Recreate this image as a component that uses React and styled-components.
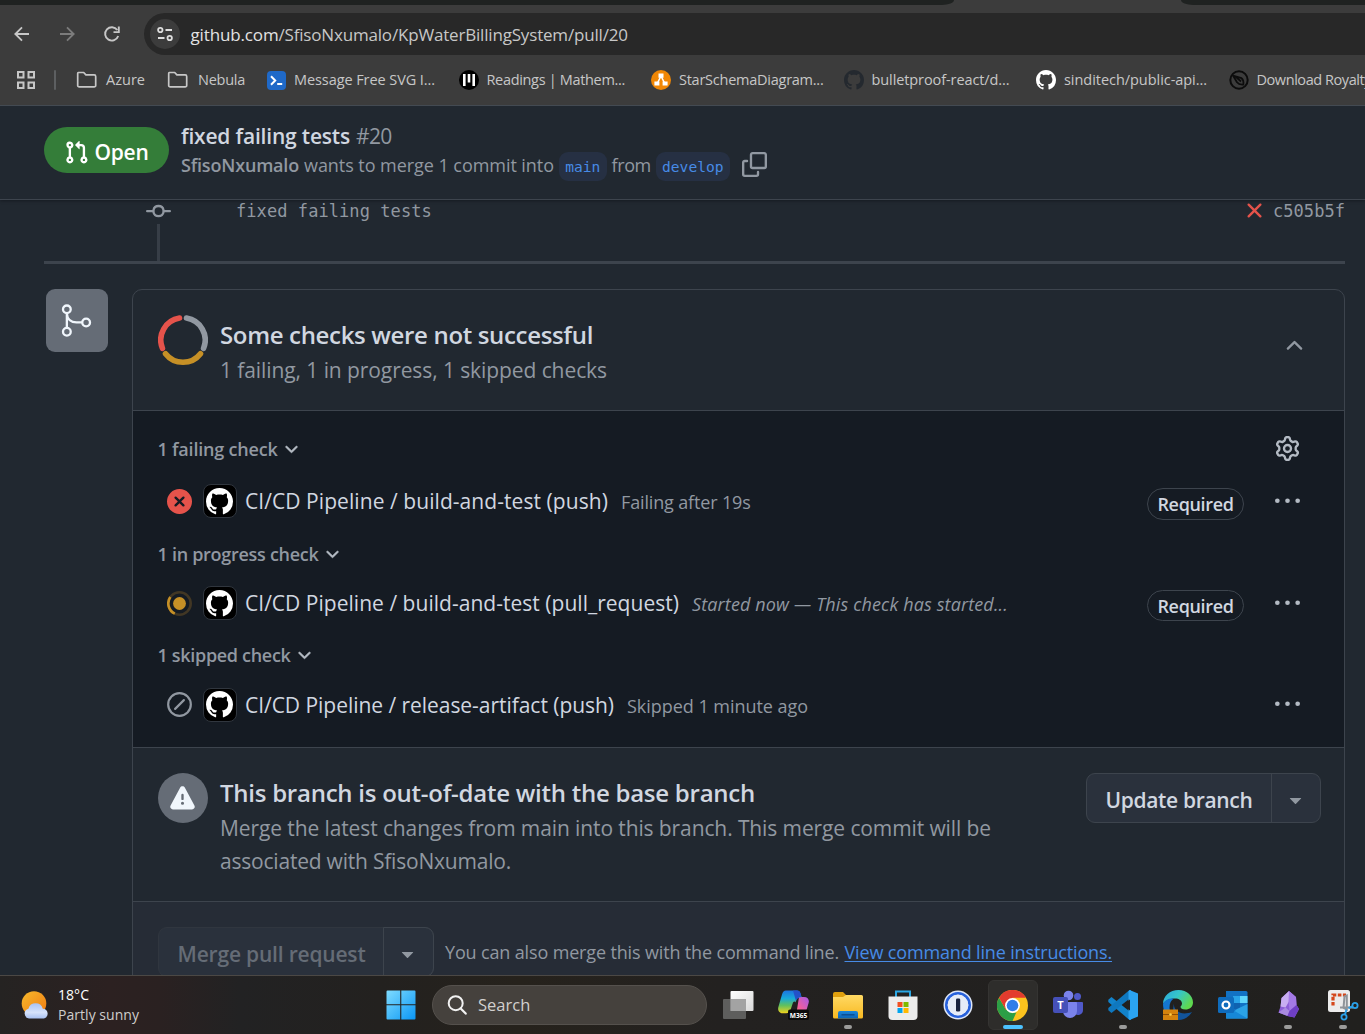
import React from "react";
import styled, { createGlobalStyle, css } from "styled-components";

const Global = createGlobalStyle`
  * { box-sizing: border-box; }
  html, body { margin: 0; overflow: hidden; background: #212830; }
  body { font-family: "Open Sans", "Noto Sans", sans-serif; }
  svg { display: block; flex: none; }
`;

const mono = `"DejaVu Sans Mono", "Liberation Mono", monospace`;

/* ---------- shell ---------- */
const Screen = styled.div`
  width: 1365px; height: 1034px; overflow: hidden;
  display: flex; flex-direction: column;
`;
const Text = styled.span`
  white-space: pre;
  font-size: ${(p) => p.$size || 18}px;
  font-weight: ${(p) => (p.$bold ? 600 : 400)};
  font-style: ${(p) => (p.$italic ? "italic" : "normal")};
  letter-spacing: ${(p) => p.$ls || 0}px;
  color: ${(p) => p.$color || "#9198a1"};
  line-height: ${(p) => p.$lh || 26}px;
`;

/* ---------- browser ---------- */
const TabStrip = styled.div`
  height: 5px; background: #3c3c3c; display: flex; justify-content: space-between; flex: none;
`;
const InactiveTabs = styled.div`
  height: 5px; background: #1f2221;
  width: ${(p) => p.$w}px;
  border-radius: ${(p) => (p.$left ? "0 0 12px 0 / 0 0 5px 0" : "0 0 0 12px / 0 0 0 5px")};
`;
const Toolbar = styled.div`
  height: 58px; flex: none; background: #3c3c3c; display: flex; align-items: center;
  padding: 0 0 0 13px;
`;
const NavIcons = styled.div`
  display: flex; align-items: center; gap: 27px; width: 131px;
`;
const AddressBar = styled.div`
  flex: 1; height: 42px; background: #282828; border-radius: 21px 0 0 21px;
  display: flex; align-items: center; padding-left: 6px; gap: 10.5px;
`;
const SiteInfo = styled.div`
  width: 30px; height: 30px; border-radius: 50%; background: #3c3c3c;
  display: flex; align-items: center; justify-content: center;
`;
const Url = styled.div`
  padding-top: 2px; display: flex;
`;
const Bookmarks = styled.div`
  height: 43px; flex: none; background: #3c3c3c; border-bottom: 1px solid #434a52;
  display: flex; align-items: center; padding: 0 0 8px 17px; overflow: hidden;
`;
const Separator = styled.div`
  width: 2px; height: 20px; background: #5d5f61; margin: 0 20px 0 19px; border-radius: 1px; flex: none;
`;
const Bookmark = styled.div`
  display: flex; align-items: center; gap: ${(p) => p.$gap || 8}px; flex: none;
  width: ${(p) => p.$w}px;
`;

/* ---------- PR header ---------- */
const Page = styled.div`
  flex: 1; min-height: 0; overflow: hidden; background: #212830;
  display: flex; flex-direction: column;
`;
const PrHeader = styled.header`
  height: 94px; flex: none; border-bottom: 1px solid #3d444d; padding: 0 0 0 44px;
  display: flex; align-items: flex-start; gap: 12px;
  box-shadow: 0 1px 3px rgba(1, 4, 9, 0.35);
`;
const OpenBadge = styled.div`
  width: 125px; height: 46px; margin-top: 21px; border-radius: 23px; background: #347d39;
  display: flex; align-items: center; padding: 4px 0 0 20px; gap: 5.5px;
`;
const PrInfo = styled.div`
  display: flex; flex-direction: column; padding-top: 16px;
`;
const Line = styled.div`
  display: flex; align-items: center; height: ${(p) => p.$h}px; gap: ${(p) => p.$gap || 6}px;
`;
const Branch = styled.span`
  font: 14.6px/29px ${mono}; color: #478be6; background: #263043; border-radius: 9px;
  height: 29px; padding: 0 6.2px; letter-spacing: ${(p) => p.$ls || 0}px; white-space: pre;
  margin: 3px 0 0;
`;
const CopyButton = styled.div`
  margin-left: 7px;
`;

/* ---------- timeline ---------- */
const Timeline = styled.div`
  height: 64px; flex: none; margin: 0 20px 0 44px; border-bottom: 3px solid #3d444d;
  display: flex; align-items: flex-start;
`;
const CommitTrack = styled.div`
  width: 192px; height: 61px; padding-left: 102px; display: flex; flex-direction: column;
  svg { margin-top: -1px; }
`;
const TrackLine = styled.div`
  width: 3px; flex: 1; background: #373e47; margin: 0 0 0 11px;
`;
const CommitText = styled.span`
  font: 17px/22px ${mono}; letter-spacing: ${(p) => p.$ls}px; color: #9198a1; white-space: pre;
`;
const CommitHash = styled.div`
  margin: -2px 0 0 auto; display: flex; align-items: center; gap: 6px;
`;

/* ---------- merge box ---------- */
const MergeArea = styled.div`
  flex: 1; min-height: 0; display: flex; gap: 24px; padding: 25px 20px 0 46px; overflow: hidden;
`;
const MergeIcon = styled.div`
  width: 62px; height: 63px; border-radius: 9px; background: #656c76; flex: none;
  display: flex; align-items: center; justify-content: center; padding-right: 2px;
`;
const MergeBox = styled.section`
  flex: 1; height: 740px; border: 1px solid #3d444d; border-radius: 10px; overflow: hidden;
`;
const sectionRow = css`
  display: flex; align-items: flex-start; gap: 12px; padding-left: 25px;
`;
const StatusHeader = styled.div`
  ${sectionRow} height: 121px; padding-top: 25px; border-bottom: 1px solid #3d444d;
`;
const Copy = styled.div`
  display: flex; flex-direction: column; padding-top: ${(p) => p.$top || 0}px;
`;
const Collapse = styled.div`
  margin: 18px 37px 0 auto;
`;
const Checks = styled.div`
  height: 337px; background: #151b23; border-bottom: 1px solid #3d444d; padding: 20px 44px 0 24.5px;
`;
const GroupTitle = styled.div`
  display: flex; align-items: center; gap: 4px; height: ${(p) => p.$h || 36}px;
`;
const Gear = styled.div`
  margin: -2px 0 0 auto;
`;
const CheckRow = styled.div`
  display: flex; align-items: center; height: ${(p) => p.$h}px; padding-left: 9px;
`;
const Avatar = styled.div`
  width: 34px; height: 34px; margin: 0 8.500px 0 11px; border-radius: 8px; background: #000;
  border: 1px solid #30363e; display: flex; align-items: center; justify-content: center; flex: none;
`;
const Detail = styled.div`
  margin-left: 13px; padding-top: 2px; display: flex;
`;
const Required = styled.div`
  height: ${(p) => p.$h || 32}px; width: 97px; margin: 5px 31px 0 auto; border: 1px solid #3d444d; border-radius: 16px;
  display: flex; align-items: center; justify-content: center;
`;
const Menu = styled.div`
  margin-left: ${(p) => (p.$auto ? "auto" : "0")};
`;
const BranchState = styled.div`
  ${sectionRow} height: 154px; padding-top: 25px; padding-right: 23px; border-bottom: 1px solid #3d444d;
`;
const AlertCircle = styled.div`
  width: 50px; height: 50px; border-radius: 50%; background: #656c76; flex: none;
  display: flex; align-items: center; justify-content: center; padding-right: 1px;
`;
const SplitButton = styled.div`
  display: flex; height: 50px; border-radius: 9px; background: #2a313c;
  border: 1px solid ${(p) => (p.$muted ? "#30363f" : "#3d444d")};
  margin-left: ${(p) => (p.$push ? "auto" : "0")}; flex: none;
`;
const ButtonLabel = styled.div`
  width: ${(p) => p.$w}px; display: flex; align-items: center; justify-content: center; padding-top: 4px;
`;
const ButtonCaret = styled.div`
  width: ${(p) => p.$w}px; border-left: 1px solid #3d444d; display: flex; align-items: center; justify-content: center;
  ${(p) => p.$outlined && css`border: 1px solid #3d444d; margin: -1px; border-radius: 0 9px 9px 0;`}
  padding: 2px 2px 0 0;
`;
const MergeFooter = styled.div`
  background: #262c36; height: 180px; padding: 25px 0 0 25px; display: flex; align-items: flex-start; gap: 11px;
`;
const FooterText = styled.div`
  display: flex; gap: 5.500px; padding-top: 12px;
`;
const Link = styled(Text)`
  color: #478be6; text-decoration: underline; text-underline-offset: 2px; text-decoration-thickness: 1px;
`;

/* ---------- taskbar ---------- */
const Taskbar = styled.footer`
  height: 59px; flex: none; border-top: 1px solid #4b4845; display: flex; align-items: center; overflow: hidden;
  background: linear-gradient(90deg, #252322 0, #2c2121 110px, #2a2121 160px, #222223 240px, #23211f 380px, #26221c 520px, #232120 720px, #21201e 1365px);
`;
const Weather = styled.div`
  width: 373px; flex: none; padding-left: 20px; display: flex; align-items: center; gap: 8px;
`;
const Slot = styled.div`
  width: 55px; height: 58px; flex: none; display: flex; flex-direction: column; align-items: center; justify-content: center;
  position: relative;
`;
const ActiveTile = styled.div`
  width: 50px; height: 50px; border-radius: 6px; background: #2e2d2b; border: 1px solid #353432;
  display: flex; align-items: center; justify-content: center;
`;
const RunMark = styled.div`
  position: absolute; bottom: 5px; height: 4px; border-radius: 2px;
  width: ${(p) => (p.$active ? 20 : 8)}px; background: ${(p) => (p.$active ? "#4cc2ff" : "#9b9b9a")};
`;
const SearchBox = styled.div`
  width: 275px; height: 40px; margin: 0 3px 0 4px; border-radius: 20px; background: #45413d; border: 1px solid #55514d;
  display: flex; align-items: center; gap: 11px; padding-left: 14px; flex: none;
`;

/* ---------- icons ---------- */
const paths = {
  github: "M8 0c4.42 0 8 3.58 8 8a8.013 8.013 0 0 1-5.45 7.59c-.4.08-.55-.17-.55-.38 0-.27.01-1.13.01-2.2 0-.75-.25-1.23-.54-1.48 1.78-.2 3.65-.88 3.65-3.95 0-.88-.31-1.59-.82-2.15.08-.2.36-1.02-.08-2.12 0 0-.67-.22-2.2.82-.64-.18-1.32-.27-2-.27-.68 0-1.36.09-2 .27-1.53-1.03-2.2-.82-2.2-.82-.44 1.1-.16 1.92-.08 2.12-.51.56-.82 1.28-.82 2.15 0 3.06 1.86 3.75 3.64 3.95-.23.2-.44.55-.51 1.07-.46.21-1.61.55-2.33-.66-.15-.24-.6-.83-1.23-.82-.67.01-.27.38.01.53.34.19.73.9.82 1.13.16.45.68 1.31 2.69.94 0 .67.01 1.3.01 1.49 0 .21-.15.45-.55.38A7.995 7.995 0 0 1 0 8c0-4.42 3.58-8 8-8Z",
  pull: "M1.5 3.25a2.25 2.25 0 1 1 3 2.122v5.256a2.251 2.251 0 1 1-1.5 0V5.372A2.25 2.25 0 0 1 1.5 3.25Zm5.677-.177L9.573.677A.25.25 0 0 1 10 .854V2.5h1A2.5 2.5 0 0 1 13.5 5v5.628a2.251 2.251 0 1 1-1.5 0V5a1 1 0 0 0-1-1h-1v1.646a.25.25 0 0 1-.427.177L7.177 3.427a.25.25 0 0 1 0-.354ZM3.75 2.5a.75.75 0 1 0 0 1.5.75.75 0 0 0 0-1.5Zm0 9.5a.75.75 0 1 0 0 1.5.75.75 0 0 0 0-1.5Zm8.25.75a.75.75 0 1 0 1.5 0 .75.75 0 0 0-1.5 0Z",
  copy: "M0 6.75C0 5.784.784 5 1.75 5h1.5a.75.75 0 0 1 0 1.5h-1.5a.25.25 0 0 0-.25.25v7.5c0 .138.112.25.25.25h7.5a.25.25 0 0 0 .25-.25v-1.5a.75.75 0 0 1 1.5 0v1.5A1.75 1.75 0 0 1 9.25 16h-7.5A1.75 1.75 0 0 1 0 14.25Z M5 1.75C5 .784 5.784 0 6.75 0h7.5C15.216 0 16 .784 16 1.75v7.5A1.75 1.75 0 0 1 14.25 11h-7.5A1.75 1.75 0 0 1 5 9.25Zm1.75-.25a.25.25 0 0 0-.25.25v7.5c0 .138.112.25.25.25h7.5a.25.25 0 0 0 .25-.25v-7.5a.25.25 0 0 0-.25-.25Z",
  gear: "M8 0a8.2 8.2 0 0 1 .701.031C9.444.095 9.99.645 10.16 1.29l.288 1.107c.018.066.079.158.212.224.231.114.454.243.668.386.123.082.233.09.299.071l1.103-.303c.644-.176 1.392.021 1.82.63.27.385.506.792.704 1.218.315.675.111 1.422-.364 1.891l-.814.806c-.049.048-.098.147-.088.294.016.257.016.515 0 .772-.01.147.038.246.088.294l.814.806c.475.469.679 1.216.364 1.891a7.977 7.977 0 0 1-.704 1.217c-.428.61-1.176.807-1.82.63l-1.102-.302c-.067-.019-.177-.011-.3.071a5.909 5.909 0 0 1-.668.386c-.133.066-.194.158-.211.224l-.29 1.106c-.168.646-.715 1.196-1.458 1.26a8.006 8.006 0 0 1-1.402 0c-.743-.064-1.289-.614-1.458-1.26l-.289-1.106c-.018-.066-.079-.158-.212-.224a5.738 5.738 0 0 1-.668-.386c-.123-.082-.233-.09-.299-.071l-1.103.303c-.644.176-1.392-.021-1.82-.63a8.12 8.12 0 0 1-.704-1.218c-.315-.675-.111-1.422.363-1.891l.815-.806c.05-.048.098-.147.088-.294a6.214 6.214 0 0 1 0-.772c.01-.147-.038-.246-.088-.294l-.815-.806C.635 6.045.431 5.298.746 4.623a7.92 7.92 0 0 1 .704-1.217c.428-.61 1.176-.807 1.82-.63l1.102.302c.067.019.177.011.3-.071.214-.143.437-.272.668-.386.133-.066.194-.158.211-.224l.29-1.106C6.009.645 6.556.095 7.299.03 7.53.01 7.764 0 8 0Zm-.571 1.525c-.036.003-.108.036-.137.146l-.289 1.105c-.147.561-.549.967-.998 1.189-.173.086-.34.183-.5.29-.417.278-.97.423-1.529.27l-1.103-.303c-.109-.03-.175.016-.195.045-.22.312-.412.644-.573.99-.014.031-.021.11.059.19l.815.806c.411.406.562.957.53 1.456a4.709 4.709 0 0 0 0 .582c.032.499-.119 1.05-.53 1.456l-.815.806c-.081.08-.073.159-.059.19.162.346.353.677.573.989.02.03.085.076.195.046l1.102-.303c.56-.153 1.113-.008 1.53.27.161.107.328.204.501.29.447.222.85.629.997 1.189l.289 1.105c.029.109.101.143.137.146a6.6 6.6 0 0 0 1.142 0c.036-.003.108-.036.137-.146l.289-1.105c.147-.561.549-.967.998-1.189.173-.086.34-.183.5-.29.417-.278.97-.423 1.529-.27l1.103.303c.109.029.175-.016.195-.045.22-.313.411-.644.573-.99.014-.031.021-.11-.059-.19l-.815-.806c-.411-.406-.562-.957-.53-1.456a4.709 4.709 0 0 0 0-.582c-.032-.499.119-1.05.53-1.456l.815-.806c.081-.08.073-.159.059-.19a6.464 6.464 0 0 0-.573-.989c-.02-.03-.085-.076-.195-.046l-1.102.303c-.56.153-1.113.008-1.53-.27a4.44 4.44 0 0 0-.501-.29c-.447-.222-.85-.629-.997-1.189l-.289-1.105c-.029-.11-.101-.143-.137-.146a6.6 6.6 0 0 0-1.142 0ZM11 8a3 3 0 1 1-6 0 3 3 0 0 1 6 0ZM9.5 8a1.5 1.5 0 1 0-3.001.001A1.5 1.5 0 0 0 9.5 8Z",
  alert: "M6.457 1.047c.659-1.234 2.427-1.234 3.086 0l6.082 11.378A1.75 1.75 0 0 1 14.082 15H1.918a1.75 1.75 0 0 1-1.543-2.575ZM8 5a.75.75 0 0 0-.75.75v2.5a.75.75 0 0 0 1.5 0v-2.5A.75.75 0 0 0 8 5Zm1 6a1 1 0 1 0-2 0 1 1 0 0 0 2 0Z",
  down: "M12.78 5.22a.749.749 0 0 1 0 1.06l-4.25 4.25a.749.749 0 0 1-1.06 0L3.22 6.28a.749.749 0 1 1 1.06-1.06L8 8.939l3.72-3.719a.749.749 0 0 1 1.06 0Z",
  up: "M3.22 10.53a.749.749 0 0 1 0-1.06l4.25-4.25a.749.749 0 0 1 1.06 0l4.25 4.25a.749.749 0 1 1-1.06 1.06L8 6.811 4.28 10.53a.749.749 0 0 1-1.06 0Z",
  fail: "M2.343 13.657A8 8 0 1 1 13.658 2.343 8 8 0 0 1 2.343 13.657ZM6.03 4.97a.751.751 0 0 0-1.042.018.751.751 0 0 0-.018 1.042L6.94 8 4.97 9.97a.749.749 0 0 0 .326 1.275.749.749 0 0 0 .734-.215L8 9.06l1.97 1.97a.749.749 0 0 0 1.275-.326.749.749 0 0 0-.215-.734L9.06 8l1.97-1.97a.749.749 0 0 0-.326-1.275.749.749 0 0 0-.734.215L8 6.94Z",
  x: "M3.72 3.72a.75.75 0 0 1 1.06 0L8 6.94l3.22-3.22a.749.749 0 0 1 1.275.326.749.749 0 0 1-.215.734L9.06 8l3.22 3.22a.749.749 0 0 1-.326 1.275.749.749 0 0 1-.734-.215L8 9.06l-3.22 3.22a.751.751 0 0 1-1.042-.018.751.751 0 0 1-.018-1.042L6.94 8 3.72 4.78a.75.75 0 0 1 0-1.06Z",
  commit: "M11.93 8.5a4.002 4.002 0 0 1-7.86 0H.75a.75.75 0 0 1 0-1.5h3.32a4.002 4.002 0 0 1 7.86 0h3.32a.75.75 0 0 1 0 1.5Zm-1.43-.75a2.5 2.5 0 1 0-5 0 2.5 2.5 0 0 0 5 0Z",
  kebab: "M8 9a1.5 1.5 0 1 0 0-3 1.5 1.5 0 0 0 0 3ZM1.5 9a1.5 1.5 0 1 0 0-3 1.5 1.5 0 0 0 0 3Zm13 0a1.5 1.5 0 1 0 0-3 1.5 1.5 0 0 0 0 3Z",
  caret: "m4.427 7.427 3.396 3.396a.25.25 0 0 0 .354 0l3.396-3.396A.25.25 0 0 0 11.396 7H4.604a.25.25 0 0 0-.177.427Z",
};
const Oct = ({ name, size = 25, color = "#9198a1", heavy = 0 }) => (
  <svg width={size} height={size} viewBox="0 0 16 16" fill={color} stroke={heavy ? color : "none"} strokeWidth={heavy}><path d={paths[name]} /></svg>
);
const Svg = ({ w = 20, h, vb, children }) => (
  <svg width={w} height={h || w} viewBox={vb || `0 0 ${w} ${h || w}`} fill="none">{children}</svg>
);
const Folder = () => (
  <Svg w={21} h={18}><path d="M2.5 1.5h5.2l2.2 2.4h8.3a1.5 1.5 0 0 1 1.5 1.5v9a1.5 1.5 0 0 1-1.5 1.5h-15a1.5 1.5 0 0 1-1.5-1.5V2.5a1 1 0 0 1 .8-1Z" stroke="#c7c7c7" strokeWidth="1.7" strokeLinejoin="round" /></Svg>
);
const ring = (cx, cy, r, a, b) => {
  const pt = (d) => `${cx + r * Math.sin((d * Math.PI) / 180)} ${cy - r * Math.cos((d * Math.PI) / 180)}`;
  return `M${pt(a)}A${r} ${r} 0 0 1 ${pt(b)}`;
};
const Donut = () => (
  <Svg w={50}>
    <g strokeWidth="5.6" strokeLinecap="round">
      <path d={ring(25, 25, 22.2, 9, 112)} stroke="#9198a1" />
      <path d={ring(25, 25, 22.2, 128, 232)} stroke="#c69026" />
      <path d={ring(25, 25, 22.2, 248, 351)} stroke="#e5534b" />
    </g>
  </Svg>
);
const Running = () => (
  <Svg w={25}>
    <circle cx="12.5" cy="12.5" r="11.2" stroke="#423724" strokeWidth="2.6" />
    <path d={ring(12.5, 12.5, 11.2, 205, 305)} stroke="#c69026" strokeWidth="2.6" />
    <circle cx="12.5" cy="12.5" r="6.4" fill="#c69026" />
  </Svg>
);
const Skipped = () => (
  <Svg w={25} vb="0 0 16 16"><circle cx="8" cy="8" r="7.25" stroke="#9198a1" strokeWidth="1.4" /><path d="M5.2 10.8l5.6-5.6" stroke="#9198a1" strokeWidth="1.4" strokeLinecap="round" /></Svg>
);

/* ---------- parts ---------- */
const Group = ({ label, ls, h, gear }) => (
  <GroupTitle $h={h}>
    <Text $bold $ls={ls}>{label}</Text>
    <Oct name="down" size={19} color="#b3bac3" heavy={0.35} />
    {gear && <Gear><Oct name="gear" color="#b3bac3" /></Gear>}
  </GroupTitle>
);
const Check = ({ icon, title, ls, detail, dls, italic, required, h }) => (
  <CheckRow $h={h}>
    {icon}
    <Avatar><Oct name="github" size={27} color="#fff" /></Avatar>
    <Text $size={21} $ls={ls} $color="#d1d7e0">{title}</Text>
    <Detail><Text $ls={dls} $italic={italic}>{detail}</Text></Detail>
    {required && <Required $h={required}><Text $bold $ls={-0.359} $color="#d1d7e0">Required</Text></Required>}
    <Menu $auto={!required}><Oct name="kebab" color="#b3bac3" /></Menu>
  </CheckRow>
);
const TaskApp = ({ children, running, active }) => (
  <Slot>{active ? <ActiveTile>{children}</ActiveTile> : children}{(running || active) && <RunMark $active={active} />}</Slot>
);

const bookmarks = [
  ["Azure", 0.015, 91, <Folder key="i" />, 9],
  ["Nebula", -0.257, 100, <Folder key="i" />, 10],
  ["Message Free SVG I...", -0.08, 192, <Svg key="i" w={19}><rect width="19" height="19" rx="4" fill="#1f69c8" /><path d="M4 5.3l4.2 4.2L4 13.7M10.2 13h5" stroke="#fff" strokeWidth="2" /></Svg>],
  ["Readings | Mathem...", -0.33, 192, <Svg key="i" w={20}><circle cx="10" cy="10" r="10" fill="#000" /><path d="M5.3 4v12M10 4v8.5M14.7 4v12" stroke="#fff" strokeWidth="2.6" /></Svg>, 7.5],
  ["StarSchemaDiagram...", -0.25, 193, <Svg key="i" w={20}><circle cx="10" cy="10" r="10" fill="#f08705" /><path d="M10 6l-4 8M10 6l4 8" stroke="#fff" strokeWidth="1.6" /><path d="M7.5 3.5h5v4.2h-5zM3.4 11.6h5v4h-5zM11.6 11.6h5v4h-5z" fill="#fff" /></Svg>],
  ["bulletproof-react/d...", -0.093, 192, <Oct key="i" name="github" size={20} color="#24292f" />, 7.5],
  ["sinditech/public-api...", -0.045, 193, <Oct key="i" name="github" size={20} color="#fff" />],
  ["Download Royalty", -0.436, 160, <Svg key="i" w={20}><circle cx="10" cy="10" r="8.700" stroke="#0c0c0c" strokeWidth="2" /><path d="M4 5.500L12.500 8.200c2 1.600 2.200 4 1.800 6.300-2.600.2-4.800-.2-6.300-2.200zM6.500 6.500l5.500 5" stroke="#0c0c0c" strokeWidth="1.800" strokeLinejoin="round" /></Svg>, 7.5],
];

export default function App() {
  return (
    <Screen>
      <Global />
      <TabStrip><InactiveTabs $left $w={954} /><InactiveTabs $w={184} /></TabStrip>
      <Toolbar>
        <NavIcons>
          <Svg w={18}><path d="M16 9H2.500M9 2.300L2.300 9 9 15.700" stroke="#c7c7c7" strokeWidth="1.800" /></Svg>
          <Svg w={18}><path d="M2 9h13.500M9 2.300L15.700 9 9 15.700" stroke="#7c7c7c" strokeWidth="1.800" /></Svg>
          <Svg w={18}><path d="M15.200 11A6.700 6.700 0 1 1 14.300 5" stroke="#c7c7c7" strokeWidth="1.900" /><path d="M15.800 1.500v5.600h-5.300" stroke="#c7c7c7" strokeWidth="1.900" /></Svg>
        </NavIcons>
        <AddressBar>
          <SiteInfo><Svg w={16}><g stroke="#dedede" strokeWidth="1.800"><circle cx="3.300" cy="4" r="2.200" /><path d="M8.500 4H15M1 12h6.500" /><circle cx="12.700" cy="12" r="2.200" /></g></Svg></SiteInfo>
          <Url>
            <Text $size={17} $ls={-0.141} $color="#e3e3e3">github.com</Text>
            <Text $size={17} $ls={-0.18} $color="#c7c7c7">/SfisoNxumalo/KpWaterBillingSystem/pull/20</Text>
          </Url>
        </AddressBar>
      </Toolbar>
      <Bookmarks>
        <Svg w={18}><g stroke="#c7c7c7" strokeWidth="2"><path d="M1 1h5.500v5.500H1zM11.500 1H17v5.500h-5.500zM1 11.500h5.500V17H1zM11.500 11.500H17V17h-5.500z" /></g></Svg>
        <Separator />
        {bookmarks.map(([t, ls, w, icon, gap]) => (
          <Bookmark key={t} $w={w} $gap={gap}>{icon}<Text $size={14.5} $ls={ls} $color="#c7c7c7">{t}</Text></Bookmark>
        ))}
      </Bookmarks>

      <Page>
        <PrHeader>
          <OpenBadge><Oct name="pull" color="#fff" /><Text $bold $size={21} $ls={-0.261} $color="#fff">Open</Text></OpenBadge>
          <PrInfo>
            <Line $h={27}><Text $bold $size={21} $ls={-0.189} $color="#d1d7e0">fixed failing tests</Text><Text $size={21} $ls={-0.6}>#20</Text></Line>
            <Line $h={31} $gap={5}>
              <Text $bold $ls={-0.187}>SfisoNxumalo</Text>
              <Text $ls={-0.053}>wants to merge 1 commit into</Text>
              <Branch>main</Branch>
              <Text $ls={-0.4}>from</Text>
              <Branch>develop</Branch>
              <CopyButton><Oct name="copy" /></CopyButton>
            </Line>
          </PrInfo>
        </PrHeader>

        <Timeline>
          <CommitTrack><Oct name="commit" /><TrackLine /></CommitTrack>
          <CommitText $ls={0.07}>fixed failing tests</CommitText>
          <CommitHash><Oct name="x" color="#e5534b" /><CommitText $ls={0.05}>c505b5f</CommitText></CommitHash>
        </Timeline>

        <MergeArea>
          <MergeIcon>
            <Svg w={37} vb="0 0 24 24"><g stroke="#f0f6fc" strokeWidth="1.5"><circle cx="5.750" cy="4.750" r="2.500" /><circle cx="5.750" cy="19.250" r="2.500" /><circle cx="18.250" cy="13.250" r="2.500" /><path d="M5.750 7.250v9.500M5.750 7.500c.2 3.700 2.800 5.750 6.250 5.750h3.750" /></g></Svg>
          </MergeIcon>
          <MergeBox>
            <StatusHeader>
              <Donut />
              <Copy>
                <Text as="div" $bold $size={24} $ls={-0.336} $lh={40} $color="#d1d7e0">Some checks were not successful</Text>
                <Text as="div" $size={21} $ls={-0.085} $lh={30}>1 failing, 1 in progress, 1 skipped checks</Text>
              </Copy>
              <Collapse><Oct name="up" /></Collapse>
            </StatusHeader>

            <Checks>
              <Group label="1 failing check" ls={-0.204} gear />
              <Check h={68} icon={<Oct name="fail" color="#e5534b" />} title="CI/CD Pipeline / build-and-test (push)" ls={0.066} detail="Failing after 19s" dls={-0.15} required={32} />
              <Group h={38} label="1 in progress check" ls={-0.283} />
              <Check h={60} icon={<Running />} title="CI/CD Pipeline / build-and-test (pull_request)" ls={0.026} detail="Started now — This check has started..." dls={0.137} italic required={31} />
              <Group h={44} label="1 skipped check" ls={-0.314} />
              <Check h={55} icon={<Skipped />} title="CI/CD Pipeline / release-artifact (push)" ls={-0.041} detail="Skipped 1 minute ago" dls={-0.037} />
            </Checks>

            <BranchState>
              <AlertCircle><Oct name="alert" color="#f0f6fc" /></AlertCircle>
              <Copy>
                <Text as="div" $bold $size={24} $ls={-0.25} $lh={40} $color="#d1d7e0">This branch is out-of-date with the base branch</Text>
                <Text as="div" $size={21} $ls={-0.107} $lh={31}>Merge the latest changes from main into this branch. This merge commit will be</Text>
                <Text as="div" $size={21} $ls={-0.21} $lh={35}>associated with SfisoNxumalo.</Text>
              </Copy>
              <SplitButton $push>
                <ButtonLabel $w={184}><Text $bold $size={21} $ls={-0.324} $color="#d1d7e0">Update branch</Text></ButtonLabel>
                <ButtonCaret $w={49}><Oct name="caret" /></ButtonCaret>
              </SplitButton>
            </BranchState>

            <MergeFooter>
              <SplitButton $muted>
                <ButtonLabel $w={225}><Text $bold $size={21} $ls={-0.194} $color="#656c76">Merge pull request</Text></ButtonLabel>
                <ButtonCaret $w={51} $outlined><Oct name="caret" /></ButtonCaret>
              </SplitButton>
              <FooterText>
                <Text $ls={-0.149}>You can also merge this with the command line.</Text>
                <Link $ls={-0.15}>View command line instructions.</Link>
              </FooterText>
            </MergeFooter>
          </MergeBox>
        </MergeArea>
      </Page>

      <Taskbar>
        <Weather>
          <Svg w={30}>
            <defs>
              <linearGradient id="sun" x1="0" y1="0" x2="1" y2="1"><stop stopColor="#f7b92c" /><stop offset="1" stopColor="#ef7a12" /></linearGradient>
              <linearGradient id="cloud" x1="0" y1="0" x2="0" y2="1"><stop stopColor="#a9c3f3" /><stop offset=".6" stopColor="#d6e2fb" /><stop offset="1" stopColor="#a9c1f2" /></linearGradient>
            </defs>
            <circle cx="14" cy="13.500" r="12.300" fill="url(#sun)" />
            <path d="M9 28.500a5 5 0 0 1-.6-9.800 7.500 7.500 0 0 1 14.400 0 5 5 0 0 1 1.200 9.800z" fill="url(#cloud)" />
          </Svg>
          <Copy>
            <Text $size={14} $ls={0.044} $lh={20} $color="#fff">18°C</Text>
            <Text $size={14} $ls={0.038} $lh={20} $color="#cfcdcc">Partly sunny</Text>
          </Copy>
        </Weather>
        <TaskApp>
          <Svg w={30}>
            <defs><linearGradient id="win" x1="0" y1="0" x2="1" y2="1"><stop stopColor="#7fdcff" /><stop offset="1" stopColor="#0a96f5" /></linearGradient></defs>
            <path d="M1.500.5h12.700v13.700H.5V1.500A1 1 0 0 1 1.500.5zM15.300.5H28.500A1 1 0 0 1 29.500 1.500v12.700H15.300zM.5 15.300h13.700v14.200H1.500A1 1 0 0 1 .5 28.500zM15.300 15.300h14.200v13.200a1 1 0 0 1-1 1H15.300z" fill="url(#win)" />
          </Svg>
        </TaskApp>
        <SearchBox>
          <Svg w={20}><circle cx="8.700" cy="8.200" r="7" stroke="#f2f2f2" strokeWidth="2" /><path d="M13.700 13.400l5 5.200" stroke="#f2f2f2" strokeWidth="2.200" strokeLinecap="round" /></Svg>
          <Text $size={16.5} $lh={28} $color="#d2d0ce">Search</Text>
        </SearchBox>
        <TaskApp>
          <Svg w={32}>
            <defs><linearGradient id="tv" x1="0" y1="0" x2="1" y2="1"><stop stopColor="#fff" /><stop offset="1" stopColor="#d9d9d9" /></linearGradient></defs>
            <rect x="8.500" y="2" width="23" height="20" rx="1" fill="url(#tv)" />
            <rect x="1" y="10" width="23" height="20" rx="1" fill="#6b6b6b" fillOpacity=".82" />
            <rect x="8.500" y="10" width="15.500" height="12" fill="#a3a3a3" />
          </Svg>
        </TaskApp>
        <TaskApp>
          <Svg w={32}>
            <defs>
              <linearGradient id="c1" x1="0" y1="0" x2="0" y2="1"><stop stopColor="#1d73e0" /><stop offset=".35" stopColor="#17a9d8" /><stop offset=".65" stopColor="#5fc05f" /><stop offset="1" stopColor="#f2d21c" /></linearGradient>
              <linearGradient id="c2" x1="1" y1="0" x2="0" y2="1"><stop stopColor="#a45be8" /><stop offset=".5" stopColor="#ee5f9f" /><stop offset="1" stopColor="#f9924b" /></linearGradient>
            </defs>
            <path d="M22 8h5c4 0 5.500 3 4.600 6l-3 10c-.800 3-3 5-6 5h-8c3 0 4-2 4.700-4z" fill="url(#c2)" />
            <path d="M9 1.500h11c2 0 3 1 3.500 3l1 3.500c-3 0-4.500 1-5.500 4l-.5 1.500c-.5-1.500-1.500-1.500-2.500 0l-2.500 7.500c-.8 2.200-2 3.300-4.500 3.300H6C2 24.300.3 21 1.500 17.500L5 5.500c.700-2.500 2-4 4-4z" fill="url(#c1)" />
            <path d="M16 1.500h4c2 0 3 1 3.500 3l1 3.500c-3 0-4.500 1-5.500 4z" fill="#2451c9" />
            <rect x="11" y="20.500" width="21" height="10.500" rx="2" fill="#0b0b0b" />
            <text x="21.500" y="28.600" fontFamily="Open Sans, sans-serif" fontWeight="700" fontSize="7.800" textAnchor="middle" fill="#fff" textLength="17.500" lengthAdjust="spacingAndGlyphs">M365</text>
          </Svg>
        </TaskApp>
        <TaskApp running>
          <Svg w={32}>
            <defs>
              <linearGradient id="fo" x1="0" y1="0" x2="0" y2="1"><stop stopColor="#ffd964" /><stop offset="1" stopColor="#f8b921" /></linearGradient>
              <linearGradient id="fb" x1="0" y1="0" x2="0" y2="1"><stop stopColor="#1a86d9" /><stop offset="1" stopColor="#0d63b4" /></linearGradient>
            </defs>
            <path d="M1 5a2 2 0 0 1 2-2h8l3.500 3.500V12H1z" fill="#e0a00e" />
            <path d="M1 8h10l3-2h15.500A1.500 1.500 0 0 1 31 7.500V28a1.500 1.500 0 0 1-1.500 1.500h-27A1.500 1.500 0 0 1 1 28z" fill="url(#fo)" />
            <path d="M6 29.500V24a2 2 0 0 1 2-2h16a2 2 0 0 1 2 2v5.500z" fill="url(#fb)" /><path d="M9.500 25.800h13" stroke="#0b4f94" strokeWidth="1.500" />
          </Svg>
        </TaskApp>
        <TaskApp>
          <Svg w={32}>
            <path d="M9 8V2.500h14V8" stroke="#2aa7e4" strokeWidth="2" />
            <path d="M1.500 7.500h29V27a4 4 0 0 1-4 4h-21a4 4 0 0 1-4-4z" fill="#ececec" />
            <path fill="#f25022" d="M10.500 13h5v5h-5z" /><path fill="#7fba00" d="M16.500 13h5v5h-5z" /><path fill="#00a4ef" d="M10.500 19h5v5h-5z" /><path fill="#ffb900" d="M16.500 19h5v5h-5z" />
          </Svg>
        </TaskApp>
        <TaskApp>
          <Svg w={30}>
            <circle cx="15" cy="15" r="14.500" fill="#dfe7f7" /><circle cx="15" cy="15" r="11.700" stroke="#2761dc" strokeWidth="2.600" /><circle cx="15" cy="15" r="10.300" fill="#e6ecf8" />
            <rect x="13" y="8.500" width="4.200" height="13" rx="1.200" fill="#18223f" />
          </Svg>
        </TaskApp>
        <TaskApp active>
          <Svg w={31} vb="0 0 48 48">
            <circle cx="24" cy="24" r="24" fill="#fcc31e" />
            <path d="M3.200 12l10.400 18L24 36l6-1.500L24 48A24 24 0 0 1 3.200 12z" fill="#2c9f46" />
            <path d="M24 12h20.800A24 24 0 0 0 3.200 12l10.400 18z" fill="#e33b2e" />
            <circle cx="24" cy="24" r="11.500" fill="#fff" /><circle cx="24" cy="24" r="9" fill="#2f7de9" />
          </Svg>
        </TaskApp>
        <TaskApp>
          <Svg w={32}>
            <circle cx="25.500" cy="7.500" r="3.500" fill="#5059c9" /><path d="M22 13h8a1 1 0 0 1 1 1v7a5 5 0 0 1-9 3z" fill="#5059c9" />
            <circle cx="16.500" cy="6.500" r="4.800" fill="#7b83eb" /><path d="M11 13h13a1 1 0 0 1 1 1v8a7 7 0 0 1-14 0z" fill="#7b83eb" />
            <rect x="1" y="8" width="15" height="16" rx="2" fill="#4550b8" />
            <text x="8.500" y="20" fontFamily="Open Sans, sans-serif" fontWeight="700" fontSize="11" textAnchor="middle" fill="#fff">T</text>
          </Svg>
        </TaskApp>
        <TaskApp running>
          <Svg w={32}>
            <path d="M1.300 10.700L4.500 8 24 23.500V31h-1.500L1.300 13z" fill="#1283cb" /><path d="M1.300 21.300L4.500 24 24 8.500V1h-1.500L1.300 19z" fill="#0f78bf" />
            <path d="M22.500 1L31 4.500v23L22.500 31l-1-1.500V2.500z" fill="#2ba4f2" />
            <path d="M23 10.500v11L15.500 16z" fill="#212120" />
          </Svg>
        </TaskApp>
        <TaskApp>
          <Svg w={32}>
            <defs>
              <linearGradient id="e1" x1="0" y1="0" x2="1" y2=".5"><stop stopColor="#2aa5dd" /><stop offset=".5" stopColor="#36c6c9" /><stop offset="1" stopColor="#5fd84f" /></linearGradient>
            </defs>
            <path d="M1 15C1 7 8 1 16.500 1S31 7 31 13.500c0 4.500-3.500 7-7.500 7-3.500 0-5-1.500-5-2.500s1.500-1.500 1.500-3.500c0-3-3-5-7-5C7 9.500 2.500 12 1 15z" fill="url(#e1)" />
            <path d="M1 15c1.500-4 6-6 11-5.500-3 1.500-4.500 5-4.500 9 0 6 4.500 11 10 12.300C8 32 1 25 1 15z" fill="#1476cf" />
            <path d="M12 14c-1 8 7 13 18 9-3 5-8 8-13.500 8S10 24 12 14z" fill="#12549b" />
            <path d="M1 20.500h15V31H1z" fill="#d5830d" /><path d="M1 25.500h15" stroke="#8e4e05" strokeWidth="1" /><circle cx="8.500" cy="25.500" r="1.300" fill="#ffd24a" />
          </Svg>
        </TaskApp>
        <TaskApp>
          <Svg w={32}>
            <path d="M9 2h20a1.500 1.500 0 0 1 1.500 1.500V29H9z" fill="#1272c4" /><path d="M16 7h7v7h-7z" fill="#29a3e8" /><path d="M23 7h7.500v7H23z" fill="#5fd6fb" /><path d="M16 14h7v6h-7z" fill="#0f62b0" /><path d="M30.500 15v14.500H9L20 20z" fill="#2ba3e6" /><path d="M9 17l21.500 12.500H9z" fill="#1688d8" />
            <rect x="1" y="8" width="16" height="16" rx="1.500" fill="#0f6cbd" /><circle cx="9" cy="16" r="3.500" stroke="#fff" strokeWidth="2.200" />
          </Svg>
        </TaskApp>
        <TaskApp running>
          <Svg w={32}>
            <path d="M17 2l7 6 .5 8L27 20l-4.500 8.500-7-1.500-9-3.500 2-6L9.500 9z" fill="#8d5ed8" />
            <path d="M17 2l-7.500 7-1 8.500 5 1 4-7z" fill="#c9aef2" /><path d="M17 2l7 6 .5 8-7 6-1-10z" fill="#a47ae6" /><path d="M6.500 23.500l7-5 4 3.500-2 5z" fill="#a98ae0" /><path d="M17.500 22l7-6 2.500 4-4.500 8.500-7-1.500z" fill="#6f3fc4" />
          </Svg>
        </TaskApp>
        <TaskApp running>
          <Svg w={32}>
            <rect x="1" y="1" width="22" height="22" rx="2.500" fill="#ececec" />
            <path d="M6 16.500V6H19" stroke="#d4471b" strokeWidth="3.200" strokeDasharray="3.600 1.500" />
            <path d="M17.500 7.500l2.300-1v14L16.500 19zM13 18.500h13" stroke="#8f9499" strokeWidth="2" />
            <circle cx="28" cy="16.500" r="2.600" stroke="#2aa0e8" strokeWidth="1.800" /><circle cx="17" cy="28" r="2.600" stroke="#2aa0e8" strokeWidth="1.800" /><path d="M25.500 17.500l-4 1.500M18 25.500l1.500-5" stroke="#2aa0e8" strokeWidth="2" />
          </Svg>
        </TaskApp>
      </Taskbar>
    </Screen>
  );
}
